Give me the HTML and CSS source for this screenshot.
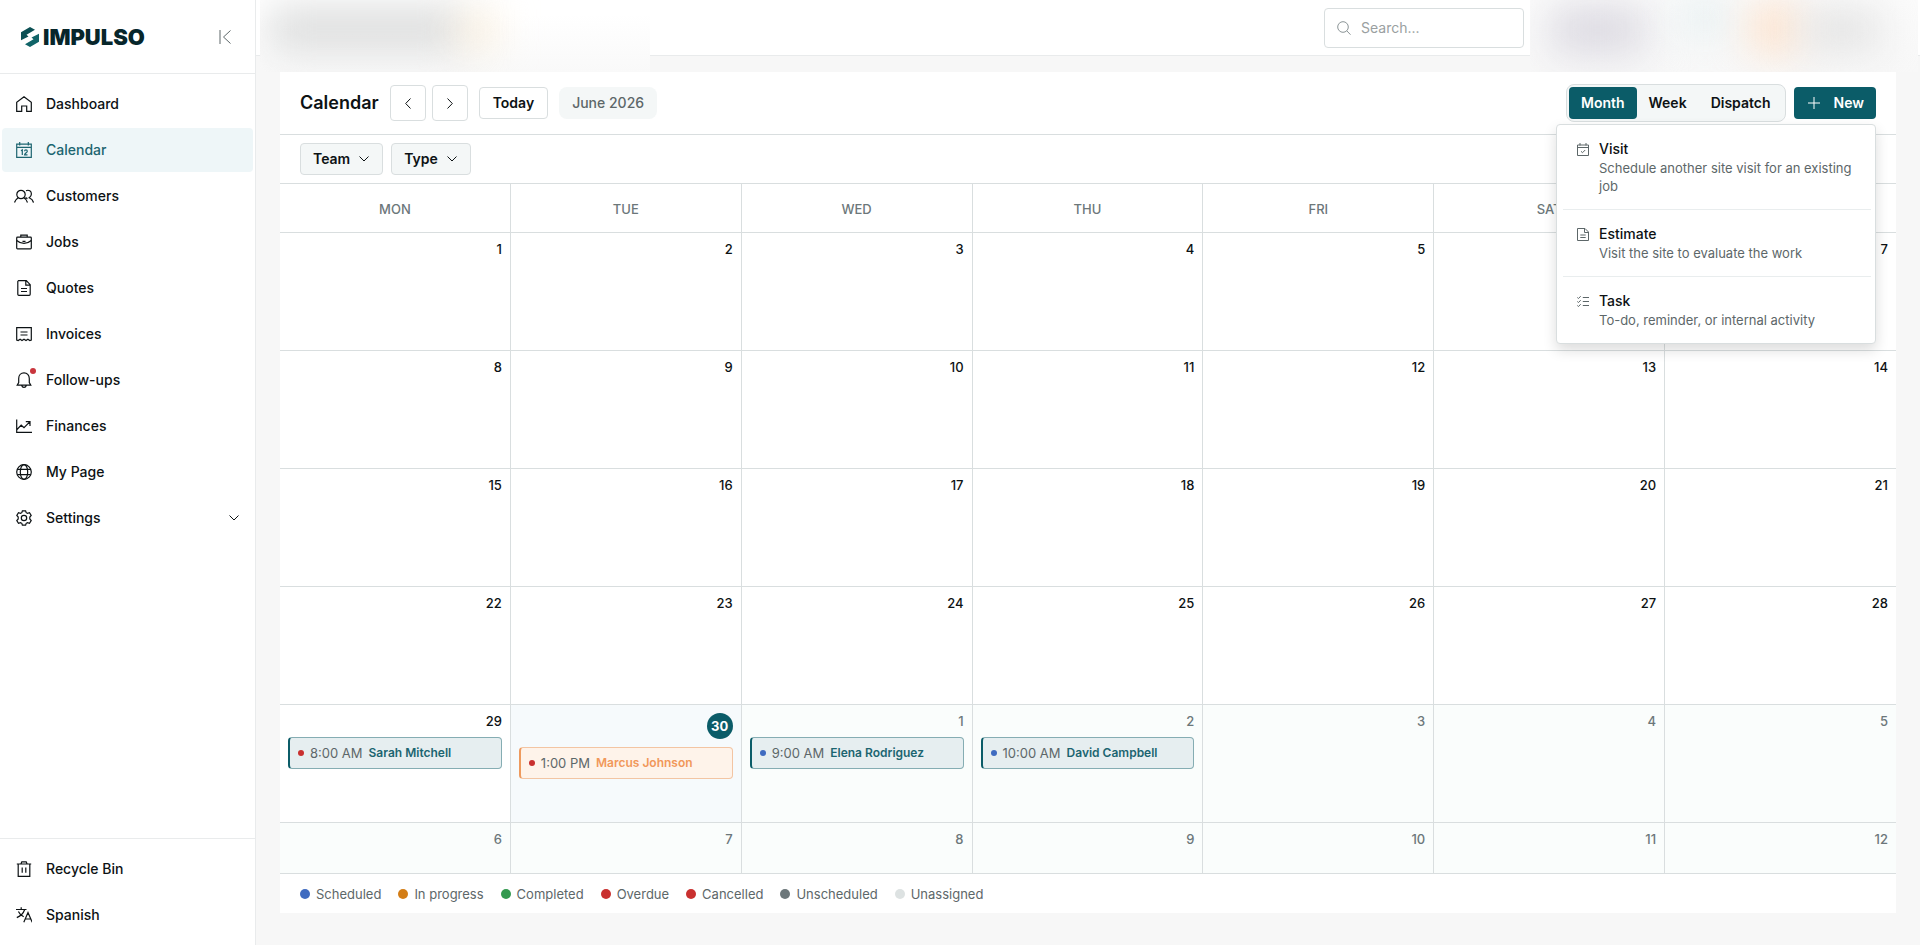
FILE: index.html
```html
<!DOCTYPE html>
<html lang="en">
<head>
<meta charset="utf-8">
<title>Impulso – Calendar</title>
<link rel="stylesheet" href="styles.css">
</head>
<body>
<div class="app">
  <aside class="sidebar">
    <div class="brand">
      <a class="logo" href="#">
        <svg class="logo-mark" viewBox="0 0 18 20" aria-hidden="true">
          <path d="M9 0L14 2.700 5.500 7.800 7.500 9.500 0 13.200V5.200Z" fill="#0c5054"/>
          <path d="M9 20L4 17.300 12.500 12.200 10.500 10.500 18 6.800V14.800Z" fill="#116468"/>
        </svg>
        <span>IMPULSO</span>
      </a>
      <button class="collapse" aria-label="Collapse sidebar">
        <svg viewBox="0 0 12 14" width="12" height="14"><path d="M1 0V14M11.500 .500L4.500 7L11.500 13.500"/></svg>
      </button>
    </div>
    <nav class="nav">
      <a class="nav-item" href="#">
        <svg class="icon" viewBox="0 0 16 16"><path d="M.700 15.300V6.300L8 .800l7.300 5.500v9h-4.600V10H5.700v5.300z"/></svg>
        <span>Dashboard</span></a>
      <a class="nav-item active" href="#">
        <svg class="icon" viewBox="0 0 16 16"><path d="M.700 2.200h14.600v13.100H.700zM.700 5.300h14.600M3.700 0v3.500M12.300 0v3.500M5 8.800l1.300-.900v5M8.600 9.200c0-1.700 2.700-1.700 2.700 0 0 1.200-2.500 1.900-2.700 3.600h2.900"/></svg>
        <span>Calendar</span></a>
      <a class="nav-item" href="#">
        <svg class="icon wide" viewBox="0 0 20 16"><circle cx="7" cy="6.500" r="4.200"/><path d="M.500 14.500c.700-2.500 2-3.600 3.700-4.700M9.800 9.800c1.700 1 3 2.200 3.700 4.700M12 2.700c3-1.400 5.400.700 5.400 3.200 0 1.700-1 3-2.200 3.900 2.300 1 3.700 2 4.300 4.700M11.500 9.500c.500.600 1.200 1 2 1.200"/></svg>
        <span>Customers</span></a>
      <a class="nav-item" href="#">
        <svg class="icon" viewBox="0 0 16 16"><rect x=".700" y="3.200" width="14.600" height="11.600" rx=".800"/><path d="M4.800 3V1.200h6.400V3M.700 6.500C5 10.300 11 10.300 15.300 6.500M6.500 7.300h3"/></svg>
        <span>Jobs</span></a>
      <a class="nav-item" href="#">
        <svg class="icon" viewBox="0 0 16 16"><path d="M2.500.700h7.800l3.900 4v9.600a1 1 0 0 1-1 1H2.800a1 1 0 0 1-1-1V1.400zM9.800.900v4.300h4.200M5 8.500h6M5 11.500h6"/></svg>
        <span>Quotes</span></a>
      <a class="nav-item" href="#">
        <svg class="icon" viewBox="0 0 16 16"><path d="M.700 14V1.700h14.600V14l-1.500.600-1.900-1.300-1.900 1.300L8 13.300l-2 1.300-1.900-1.300-1.900 1.300zM4.500 6h7M4.500 9h7"/></svg>
        <span>Invoices</span></a>
      <a class="nav-item" href="#">
        <svg class="icon" viewBox="0 0 16 16"><path d="M1.200 13.200h13.600L13.300 10.500V6.500C13.300 3.100 11 .800 8 .800S2.700 3.100 2.700 6.500v4zM5.700 13.500c.600 2.400 4 2.400 4.600 0"/></svg>
        <i class="badge"></i>
        <span>Follow-ups</span></a>
      <a class="nav-item" href="#">
        <svg class="icon" viewBox="0 0 16 16"><path d="M.700 1.500v12.800H16M1 11.500l4.200-4.300 2.800 2.500 5.500-5.500M9.800 3.700h4.200v4.200"/></svg>
        <span>Finances</span></a>
      <a class="nav-item" href="#">
        <svg class="icon" viewBox="0 0 16 16"><circle cx="8" cy="8" r="7.300"/><ellipse cx="8" cy="8" rx="3.700" ry="7.300"/><path d="M1.300 5.300h13.400M1.300 10.700h13.400"/></svg>
        <span>My Page</span></a>
      <a class="nav-item" href="#">
        <svg class="icon" viewBox="0 0 16 16"><path d="M6.400.800h3.200l.600 1.900 1.300.700 2-.600 1.700 2.700-1.400 1.600v1.800l1.400 1.600-1.700 2.700-2-.600-1.300.700-.600 1.900H6.400l-.600-1.900-1.300-.700-2 .600L.800 10.500l1.400-1.600V7.100L.800 5.500l1.700-2.700 2 .600 1.300-.700z"/><circle cx="8" cy="8" r="2.700"/></svg>
        <span>Settings</span>
        <svg class="chevron" viewBox="0 0 10 6"><path d="M.500.500L5 5 9.500.500"/></svg></a>
    </nav>
    <nav class="nav nav-bottom">
      <a class="nav-item" href="#">
        <svg class="icon" viewBox="0 0 16 16"><path d="M.800 3h14.400M2.200 3v12.300h11.600V3M5 2.800L5.800.800h4.400l.800 2M6.200 6.500v5.300M9.800 6.500v5.300"/></svg>
        <span>Recycle Bin</span></a>
      <a class="nav-item" href="#">
        <svg class="icon" viewBox="0 0 16 16"><path d="M0 2.500h10.500M5.200 .300v2.200M8.600 2.700C7.500 6 4.800 8.800.800 10.600M2.400 4.500C3.500 7 5.500 8.700 7.700 9.800M7.800 15.300L12 5.500l4.200 9.800M9.200 12h5.600"/></svg>
        <span>Spanish</span></a>
    </nav>
  </aside>

  <div class="page">
    <header class="topbar">
      <div class="haze haze-left"><i class="blob grey-wide"></i><i class="blob cream"></i></div>
      <label class="search">
        <svg viewBox="0 0 14 14" width="14" height="14"><circle cx="6" cy="6" r="5.300"/><path d="M9.800 9.800L13.500 13.700"/></svg>
        <input type="text" placeholder="Search..." aria-label="Search">
      </label>
      <div class="haze haze-right"><i class="blob violet"></i><i class="blob mint"></i><i class="blob peach"></i><i class="blob grey"></i></div>
    </header>

    <main class="card">
      <div class="toolbar">
        <h1>Calendar</h1>
        <div class="pager">
          <button class="btn square" aria-label="Previous month"><svg viewBox="0 0 6 11" width="6" height="11"><path d="M5.500.500L.700 5.500l4.800 5"/></svg></button>
          <button class="btn square" aria-label="Next month"><svg viewBox="0 0 6 11" width="6" height="11"><path d="M.500.500l4.800 5-4.800 5"/></svg></button>
        </div>
        <button class="btn">Today</button>
        <span class="period">June 2026</span>
        <div class="actions">
          <div class="segmented">
            <button class="seg on">Month</button>
            <button class="seg">Week</button>
            <button class="seg">Dispatch</button>
          </div>
          <div class="new-wrap">
            <button class="btn-new"><svg viewBox="0 0 12 12" width="12" height="12"><path d="M6 0v12M0 6h12"/></svg>New</button>
            <div class="menu">
              <button class="menu-item">
                <svg viewBox="0 0 12 13" width="12" height="13"><path d="M.500 2h11v10.500H.500zM.500 4.500h11M3 0v2.500M9 0v2.500M4 8.300l1.500 1.400L8.200 7"/></svg>
                <span class="menu-text"><b>Visit</b><small>Schedule another site visit for an existing job</small></span>
              </button>
              <button class="menu-item">
                <svg viewBox="0 0 12 13" width="12" height="13"><path d="M.500.500h7.500l3.500 3.500v8.500H.500zM7.500.500V4.500h4M3.300 7h5.400M3.300 9.500h5.400"/></svg>
                <span class="menu-text"><b>Estimate</b><small>Visit the site to evaluate the work</small></span>
              </button>
              <button class="menu-item">
                <svg viewBox="0 0 12 13" width="12" height="13"><path d="M5.800 2.500H12M5.800 6.500H12M5.800 10.500H12M.300 2.500l1.200 1L3.700 1.200M.300 6.500l1.200 1L3.700 5.200M.300 10.500l1.200 1 2.200-2.300"/></svg>
                <span class="menu-text"><b>Task</b><small>To-do, reminder, or internal activity</small></span>
              </button>
            </div>
          </div>
        </div>
      </div>

      <div class="filters">
        <button class="filter">Team <svg viewBox="0 0 10 6" width="10" height="6"><path d="M.500.500L5 5 9.500.500"/></svg></button>
        <button class="filter">Type <svg viewBox="0 0 10 6" width="10" height="6"><path d="M.500.500L5 5 9.500.500"/></svg></button>
      </div>

      <div class="month">
        <table class="grid">
          <thead><tr><th>MON</th><th>TUE</th><th>WED</th><th>THU</th><th>FRI</th><th>SAT</th><th>SUN</th></tr></thead>
          <tbody>
            <tr><td><span class="day">1</span></td><td><span class="day">2</span></td><td><span class="day">3</span></td><td><span class="day">4</span></td><td><span class="day">5</span></td><td><span class="day">6</span></td><td><span class="day">7</span></td></tr>
            <tr><td><span class="day">8</span></td><td><span class="day">9</span></td><td><span class="day">10</span></td><td><span class="day">11</span></td><td><span class="day">12</span></td><td><span class="day">13</span></td><td><span class="day">14</span></td></tr>
            <tr><td><span class="day">15</span></td><td><span class="day">16</span></td><td><span class="day">17</span></td><td><span class="day">18</span></td><td><span class="day">19</span></td><td><span class="day">20</span></td><td><span class="day">21</span></td></tr>
            <tr><td><span class="day">22</span></td><td><span class="day">23</span></td><td><span class="day">24</span></td><td><span class="day">25</span></td><td><span class="day">26</span></td><td><span class="day">27</span></td><td><span class="day">28</span></td></tr>
            <tr>
              <td><span class="day">29</span><a class="event" href="#"><i class="dot red"></i><time>8:00 AM</time><b>Sarah Mitchell</b></a></td>
              <td class="today"><span class="day">30</span><a class="event orange" href="#"><i class="dot red"></i><time>1:00 PM</time><b>Marcus Johnson</b></a></td>
              <td class="other"><span class="day">1</span><a class="event" href="#"><i class="dot blue"></i><time>9:00 AM</time><b>Elena Rodriguez</b></a></td>
              <td class="other"><span class="day">2</span><a class="event" href="#"><i class="dot blue"></i><time>10:00 AM</time><b>David Campbell</b></a></td>
              <td class="other"><span class="day">3</span></td><td class="other"><span class="day">4</span></td><td class="other"><span class="day">5</span></td>
            </tr>
            <tr><td class="other"><span class="day">6</span></td><td class="other"><span class="day">7</span></td><td class="other"><span class="day">8</span></td><td class="other"><span class="day">9</span></td><td class="other"><span class="day">10</span></td><td class="other"><span class="day">11</span></td><td class="other"><span class="day">12</span></td></tr>
          </tbody>
        </table>
      </div>

      <ul class="legend">
        <li><i class="dot blue"></i>Scheduled</li>
        <li><i class="dot amber"></i>In progress</li>
        <li><i class="dot green"></i>Completed</li>
        <li><i class="dot red"></i>Overdue</li>
        <li><i class="dot red"></i>Cancelled</li>
        <li><i class="dot slate"></i>Unscheduled</li>
        <li><i class="dot pale"></i>Unassigned</li>
      </ul>
    </main>
  </div>
</div>
</body>
</html>
```
FILE: styles.css
```css
:root {
  --teal: #0b5c68;
  --ink: #0d1214;
  --muted: #5d6769;
  --line: #d9dedf;
  --soft: #f4f7f7;
}
* { box-sizing: border-box; }
body {
  margin: 0;
  font-family: Inter, "Liberation Sans", sans-serif;
  font-size: 14px;
  line-height: 20px;
  color: var(--ink);
  background: #f7f7f7;
}
button, input { font: inherit; color: inherit; }
button { cursor: pointer; }
a { color: inherit; text-decoration: none; }
svg { fill: none; stroke: currentColor; flex: none; }
.app { display: flex; height: 100vh; }

/* Sidebar */
.sidebar {
  flex: none;
  display: flex;
  flex-direction: column;
  width: 256px;
  background: #fff;
  border-right: 1px solid #e9ebec;
}
.brand {
  display: flex;
  align-items: center;
  justify-content: space-between;
  height: 74px;
  padding: 0 24px 0 21px;
  border-bottom: 1px solid #e9ebec;
}
.logo {
  display: flex;
  align-items: center;
  gap: 4px;
  font-size: 22px;
  font-weight: 900;
  color: #07262b;
}
.logo-mark { width: 18px; height: 20px; stroke: none; }
.collapse { display: flex; padding: 0; border: 0; background: none; color: #5d6769; }
.nav { display: flex; flex-direction: column; gap: 2px; padding: 8px 2px; }
.nav-bottom { margin-top: auto; border-top: 1px solid #e9ebec; }
.nav-item {
  position: relative;
  display: flex;
  align-items: center;
  gap: 14px;
  height: 44px;
  padding: 0 14px;
  border-radius: 4px;
  font-weight: 500;
}
.nav-item.active { background: #eef6f8; color: #1c6570; }
.icon { width: 16px; height: 16px; stroke-width: 1.2; }
.icon.wide { width: 20px; margin: 0 -2px; }
.chevron { width: 10px; height: 6px; margin-left: auto; }
.badge {
  position: absolute;
  left: 28px;
  top: 10px;
  width: 6px;
  height: 6px;
  border-radius: 50%;
  background: #c9353d;
}

/* Top bar */
.page { flex: 1; min-width: 0; display: flex; flex-direction: column; }
.topbar {
  position: relative;
  flex: none;
  display: flex;
  align-items: center;
  justify-content: flex-end;
  height: 56px;
  padding-right: 396px;
  background: #fff;
  border-bottom: 1px solid #e9ebec;
}
.search {
  display: flex;
  align-items: center;
  gap: 10px;
  width: 200px;
  height: 40px;
  padding: 0 12px;
  border: 1px solid var(--line);
  border-radius: 4px;
  color: #8b9496;
}
.search input { width: 100%; min-width: 0; padding: 0; border: 0; outline: 0; background: none; }
.search input::placeholder { color: #9a9fa1; opacity: 1; }
.haze { position: absolute; top: 0; height: 72px; overflow: hidden; background: linear-gradient(#fff 20%, #f9f9f9); }
.haze-left { left: 4px; width: 390px; }
.haze-right { right: 2px; width: 388px; background: linear-gradient(#fbfbfb, #f8f8f8); }
.blob { position: absolute; filter: blur(20px); }
.grey-wide { left: 8px; top: 8px; width: 198px; height: 42px; background: #dadbdb; }
.cream { left: 200px; top: 14px; width: 36px; height: 32px; background: #fdf0da; }
.violet { left: 20px; top: 6px; width: 96px; height: 48px; background: #dbd9e1; }
.mint { left: 150px; top: 0; width: 50px; height: 34px; background: #e4eef0; }
.peach { left: 222px; top: 4px; width: 46px; height: 48px; background: #fde0c8; }
.grey { left: 274px; top: 10px; width: 76px; height: 40px; background: #e2e2e2; }

/* Calendar card */
.card {
  flex: 1;
  min-height: 0;
  display: flex;
  flex-direction: column;
  margin: 16px 24px 32px;
  background: #fff;
}
.toolbar {
  display: flex;
  align-items: center;
  gap: 11px;
  padding: 12px 20px;
  border-bottom: 1px solid var(--line);
}
h1 { margin: 0; font-size: 18px; line-height: 24px; font-weight: 600; }
.pager { display: flex; gap: 6px; }
.btn {
  display: flex;
  align-items: center;
  justify-content: center;
  height: 32px;
  padding: 0 13px;
  border: 1px solid var(--line);
  border-radius: 4px;
  background: #fff;
  font-weight: 600;
}
.btn.square { width: 36px; height: 36px; padding: 0; }
.period {
  padding: 6px 13px;
  border-radius: 8px;
  background: var(--soft);
  color: var(--muted);
  font-weight: 500;
}
.actions { display: flex; align-items: center; gap: 8px; margin-left: auto; }
.segmented {
  display: flex;
  padding: 2px;
  border: 1px solid var(--line);
  border-radius: 8px;
  background: var(--soft);
}
.seg {
  height: 32px;
  padding: 0 12px;
  border: 0;
  border-radius: 4px;
  background: none;
  font-weight: 600;
}
.seg.on { background: var(--teal); color: #fff; }
.new-wrap { position: relative; }
.btn-new {
  display: flex;
  align-items: center;
  gap: 14px;
  height: 32px;
  padding: 0 12px 0 14px;
  border: 0;
  border-radius: 4px;
  background: var(--teal);
  color: #fff;
  font-weight: 600;
}
.menu {
  position: absolute;
  z-index: 5;
  top: 37px;
  right: 0;
  width: 320px;
  padding: 0 4px 0 6px;
  border: 1px solid var(--line);
  border-radius: 4px;
  background: #fff;
  box-shadow: 0 6px 14px rgba(0, 0, 0, 0.14);
}
.menu-item {
  display: flex;
  align-items: flex-start;
  gap: 10px;
  width: 100%;
  padding: 13px 10px 14px 14px;
  border: 0;
  background: none;
  text-align: left;
}
.menu-item + .menu-item { border-top: 1px solid #e9edee; }
.menu-item svg { margin-top: 5px; color: #5d6769; }
.menu-text { display: flex; flex-direction: column; }
.menu-text b { line-height: 21px; font-weight: 500; }
.menu-text small { font-size: 13px; line-height: 18px; color: var(--muted); }
.filters {
  display: flex;
  gap: 8px;
  padding: 8px 20px;
  border-bottom: 1px solid var(--line);
}
.filter {
  display: flex;
  align-items: center;
  gap: 9px;
  height: 32px;
  padding: 0 13px 0 12px;
  border: 1px solid var(--line);
  border-radius: 4px;
  background: var(--soft);
  font-weight: 600;
}

/* Month grid */
.month { flex: 1; min-height: 0; overflow: hidden; }
.grid { width: 100%; table-layout: fixed; border-collapse: separate; border-spacing: 0; }
th, td { border-right: 1px solid var(--line); border-bottom: 1px solid var(--line); }
th:last-child, td:last-child { border-right: 0; }
th { height: 49px; padding: 2px 0 0; font-size: 13px; font-weight: 500; color: #6c777a; }
td { height: 118px; padding: 8px; vertical-align: top; }
.day {
  display: block;
  margin-bottom: 8px;
  font-size: 13px;
  line-height: 16px;
  font-weight: 500;
  text-align: right;
}
.other { background: #fafdfc; }
.other .day { color: #6c777a; }
.today { background: #f6fafc; }
.today .day {
  width: 26px;
  margin-left: auto;
  border-radius: 50%;
  background: var(--teal);
  color: #fff;
  line-height: 26px;
  font-weight: 700;
  text-align: center;
}
.event {
  display: flex;
  align-items: center;
  gap: 6px;
  height: 32px;
  padding: 0 8px;
  border: 1px solid #85adb3;
  border-left: 2px solid var(--teal);
  border-radius: 4px;
  background: #e6eef0;
  font-size: 13px;
  white-space: nowrap;
}
.event time { color: var(--muted); }
.event b { font-size: 12px; font-weight: 600; color: #1c6570; }
.event.orange { border-color: #f3c5a3; border-left-color: #ee9a5e; background: #fef3ea; }
.event.orange b { color: #f1985a; }
.dot { flex: none; width: 6px; height: 6px; border-radius: 50%; }
.blue { background: #3f6bc0; }
.red { background: #c9302f; }
.amber { background: #d37d16; }
.green { background: #33994f; }
.slate { background: #6c777a; }
.pale { background: #dde2e2; }
.legend {
  display: flex;
  gap: 17px;
  margin: 0;
  padding: 10px 20px 9px;
  border-top: 1px solid var(--line);
  list-style: none;
  font-size: 13px;
  color: var(--muted);
}
.legend li { display: flex; align-items: center; gap: 6px; }
.legend .dot { width: 10px; height: 10px; }
```
